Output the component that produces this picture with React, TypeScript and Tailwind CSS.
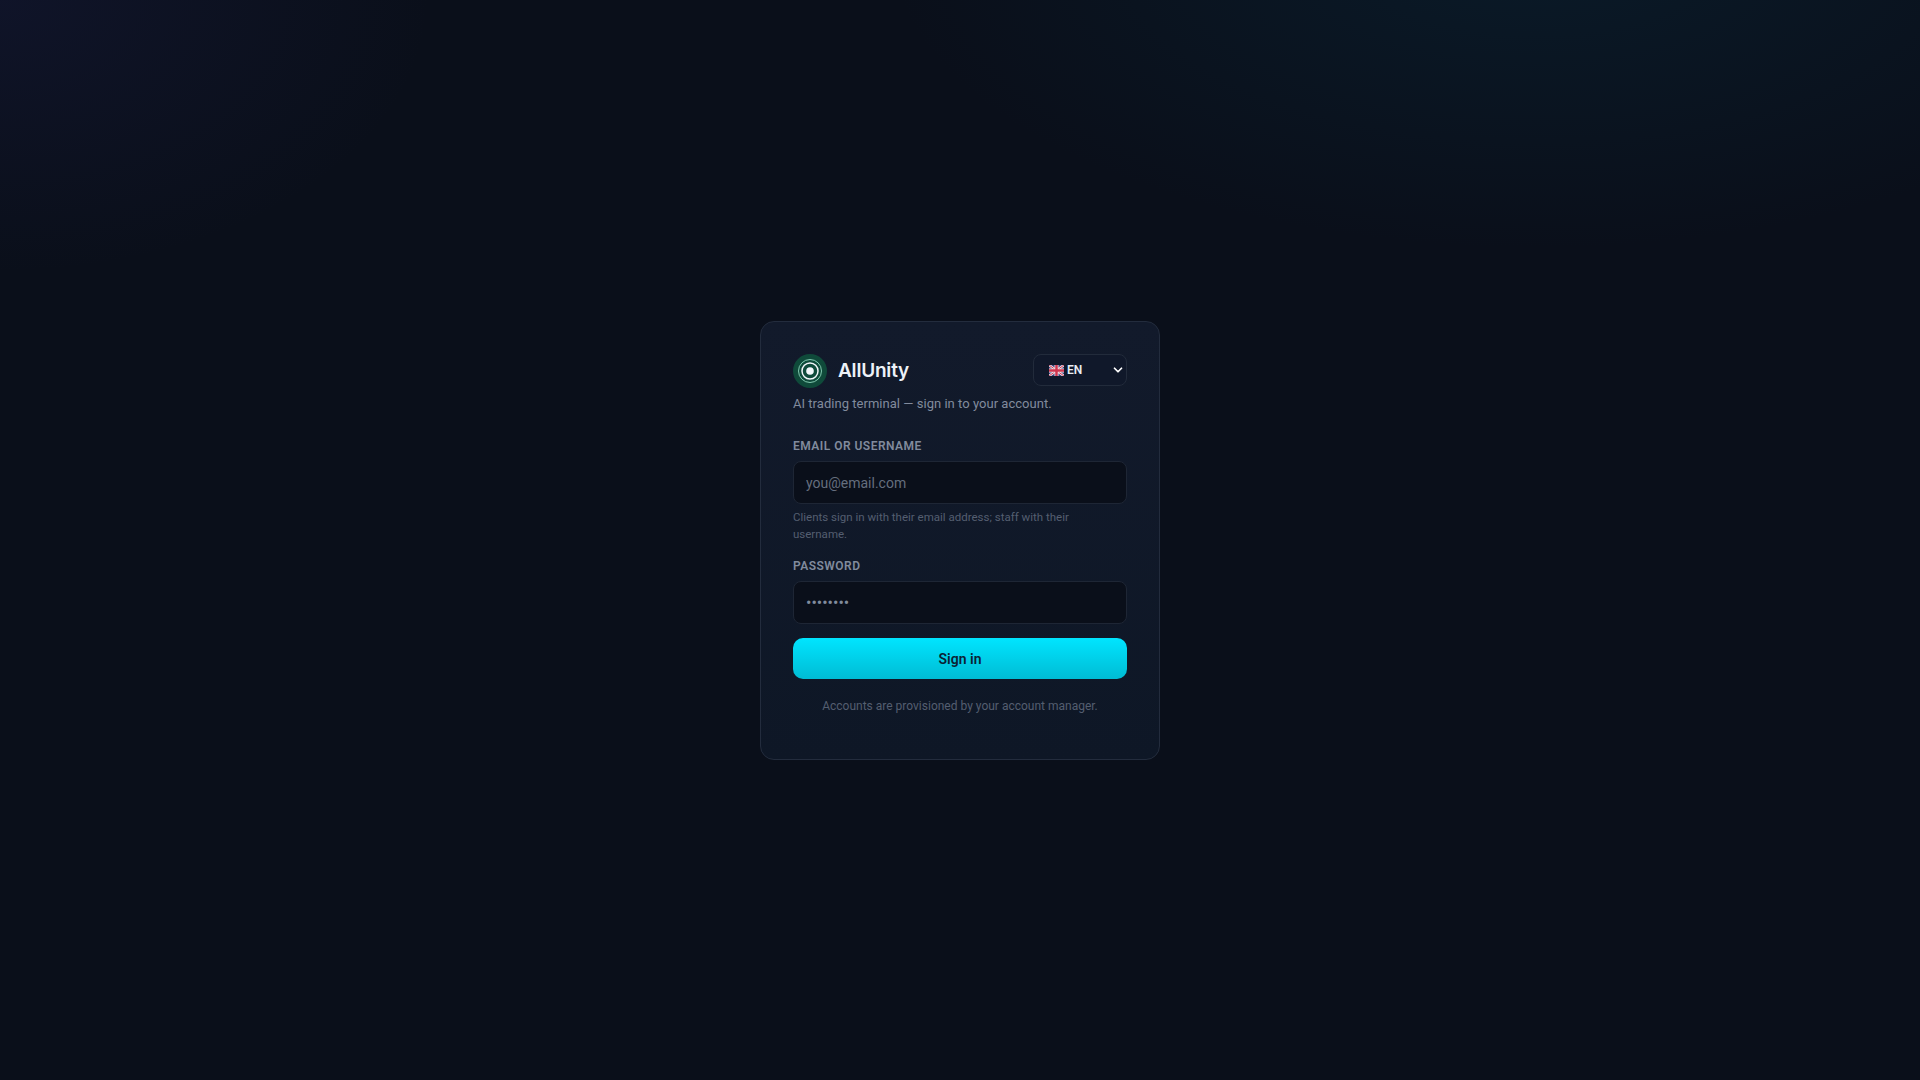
import React from "react";
import { ChevronDown } from "lucide-react";

const FlagUK = () => (
  <svg width="15" height="11" viewBox="0 0 30 22" className="rounded-[1px]">
    <rect width="30" height="22" fill="#3b3f78" />
    <path d="M0 0 30 22M30 0 0 22" stroke="#f1e6ea" strokeWidth="5" />
    <path d="M0 0 30 22M30 0 0 22" stroke="#d0354f" strokeWidth="2" />
    <path d="M15 0V22M0 11H30" stroke="#f1e6ea" strokeWidth="8" />
    <path d="M15 0V22M0 11H30" stroke="#d0354f" strokeWidth="5" />
  </svg>
);

const Logo = () => (
  <div className="w-[34px] h-[34px] rounded-full bg-[#0f4a3a] flex items-center justify-center shrink-0">
    <svg width="26" height="26" viewBox="0 0 26 26" fill="none">
      <circle cx="13" cy="13" r="11.5" stroke="#8fd8bd" strokeWidth="0.9" />
      <circle cx="13" cy="13" r="8" stroke="#f1f5f9" strokeWidth="1.5" />
      <circle cx="13" cy="13" r="3.8" fill="#f1f5f9" />
    </svg>
  </div>
);

export default function App() {
  return (
    <div
      className="min-h-screen flex items-center justify-center bg-[#0a0f1a] font-['Roboto',sans-serif]"
      style={{
        backgroundImage:
          "radial-gradient(ellipse 900px 420px at 80% -5%, rgba(10,50,70,0.32), transparent 72%), radial-gradient(ellipse 600px 380px at 0% 0%, rgba(50,50,130,0.14), transparent 72%)",
      }}
    >
      <div className="w-[400px] h-[439px] mt-[1px] rounded-[14px] border border-[#232c3d] bg-gradient-to-b from-[#121a2b] to-[#0e1726] px-8 pt-8">
        <div className="flex items-start justify-between">
          <div className="flex items-center gap-[11px]">
            <Logo />
            <span className="text-[19px] font-semibold text-[#eef2f8] font-['Inter',sans-serif] tracking-[-0.2px]">
              AllUnity
            </span>
          </div>
          <div className="w-[94px] h-[32px] rounded-lg border border-[#222b3b] bg-[#10182a] flex items-center pl-[15px] pr-[1px] text-white">
            <FlagUK />
            <span className="ml-[3px] text-xs font-semibold text-[#e8ecf3]">EN</span>
            <ChevronDown className="ml-auto w-[14px] h-[14px]" strokeWidth={3} />
          </div>
        </div>

        <p className="mt-[6px] text-[13px] leading-[20px] tracking-[0.03px] text-[#818b9d]">
          AI trading terminal — sign in to your account.
        </p>

        <label className="block mt-[24px] text-xs leading-[16px] font-semibold text-[#818b9d] tracking-[0.48px] uppercase">
          Email or username
        </label>
        <input
          placeholder="you@email.com"
          className="block mt-[7px] w-full h-[43px] rounded-lg border border-[#1e2635] bg-[#0a0f1a] px-3 text-sm text-white placeholder:text-[#656e7e] outline-none"
        />
        <p className="mt-[5px] pr-5 text-[11.5px] leading-[17px] text-[#545e70]">
          Clients sign in with their email address; staff with their username.
        </p>

        <label className="block mt-[15px] text-xs leading-[16px] font-semibold text-[#818b9d] tracking-[0.48px] uppercase">
          Password
        </label>
        <input
          type="password"
          defaultValue="password"
          className="block mt-[7px] w-full h-[43px] rounded-lg border border-[#1e2635] bg-[#0a0f1a] px-3 text-[16px] text-[#818b9d] outline-none"
        />

        <button className="block mt-[14px] w-full h-[41px] rounded-[10px] bg-gradient-to-b from-[#00e5ff] to-[#00bcd4] text-sm font-semibold text-[#0b2233]">
          Sign in
        </button>

        <p className="mt-[19px] text-center text-[12px] leading-[16px] text-[#545e70]">
          Accounts are provisioned by your account manager.
        </p>
      </div>
    </div>
  );
}
